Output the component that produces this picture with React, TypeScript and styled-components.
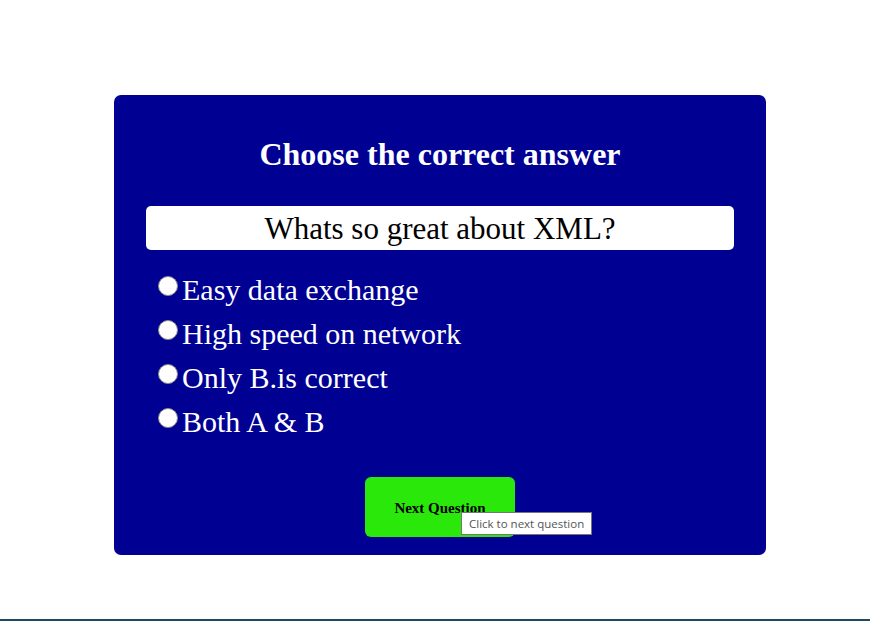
import React from 'react';
import styled, { createGlobalStyle } from 'styled-components';

const GlobalStyle = createGlobalStyle`
  html, body {
    margin: 0;
    padding: 0;
    background: #fff;
  }
  body {
    font-family: "Liberation Serif", "DejaVu Serif", serif;
  }
`;

const Page = styled.div`
  position: relative;
  width: 870px;
  height: 621px;
  box-sizing: border-box;
  padding: 95px 0 0 114px;
  border-bottom: 2px solid #1f4a63;
`;

const Card = styled.div`
  width: 652px;
  height: 460px;
  box-sizing: border-box;
  background: #000093;
  border-radius: 7px;
  padding: 36px 32px 0;
  display: flex;
  flex-direction: column;
`;

const Title = styled.h1`
  margin: 0;
  color: #fff;
  text-align: center;
  font-size: 32px;
  font-weight: bold;
  line-height: 46px;
`;

const QuestionBox = styled.div`
  margin-top: 29px;
  height: 44px;
  background: #fff;
  border-radius: 5px;
  color: #000;
  text-align: center;
  font-size: 31px;
  line-height: 46px;
`;

const Options = styled.div`
  margin-top: 22px;
  padding-left: 12px;
  display: flex;
  flex-direction: column;
`;

const Option = styled.label`
  display: flex;
  align-items: flex-start;
  height: 44px;
  color: #fff;
  font-size: 30px;
  line-height: 36px;
  cursor: pointer;
`;

const Radio = styled.input`
  appearance: none;
  margin: 4px 4px 0 0;
  width: 20px;
  height: 20px;
  border-radius: 50%;
  background: #fff;
  border: 1px solid #8a8a8a;
  box-sizing: border-box;
  flex-shrink: 0;
`;

const ButtonRow = styled.div`
  margin-top: 29px;
  display: flex;
  justify-content: center;
`;

const NextButton = styled.button`
  width: 150px;
  height: 60px;
  padding-top: 4px;
  background: #2ae80a;
  border: none;
  border-radius: 6px;
  font-family: "Liberation Serif", serif;
  font-size: 15px;
  font-weight: bold;
  color: #000;
  cursor: pointer;
`;

const Tooltip = styled.div`
  position: absolute;
  left: 461px;
  top: 512px;
  height: 23px;
  box-sizing: border-box;
  padding: 0 7px;
  background: #fff;
  border: 1px solid #767676;
  font-family: "Open Sans", "Liberation Sans", sans-serif;
  font-size: 11.5px;
  line-height: 21px;
  color: #555;
  white-space: nowrap;
`;

const options = ['Easy data exchange', 'High speed on network', 'Only B.is correct', 'Both A & B'];

export default function App() {
  return (
    <Page>
      <GlobalStyle />
      <Card>
        <Title>Choose the correct answer</Title>
        <QuestionBox>Whats so great about XML?</QuestionBox>
        <Options>
          {options.map((o) => (
            <Option key={o}>
              <Radio type="radio" name="answer" />
              {o}
            </Option>
          ))}
        </Options>
        <ButtonRow>
          <NextButton title="Click to next question">Next Question</NextButton>
        </ButtonRow>
      </Card>
      <Tooltip>Click to next question</Tooltip>
    </Page>
  );
}
